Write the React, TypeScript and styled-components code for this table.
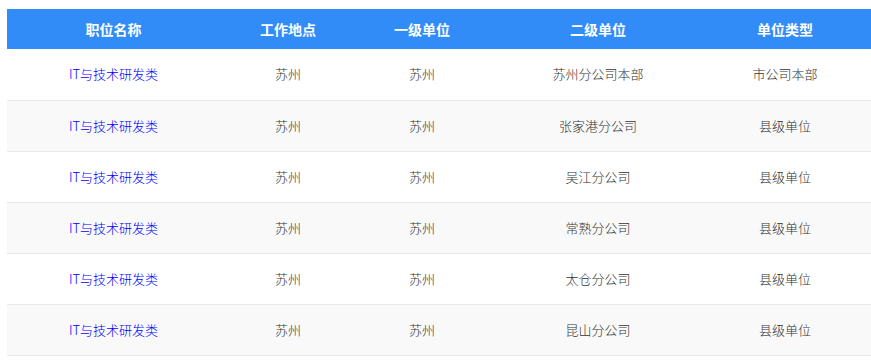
import React from "react";
import styled, { createGlobalStyle } from "styled-components";

const GlobalStyle = createGlobalStyle`
  html, body {
    margin: 0;
    padding: 0;
    background: #ffffff;
  }
  body {
    font-family: "Noto Sans CJK SC", "Noto Sans", sans-serif;
  }
`;

const Page = styled.div`
  padding: 9px 0 0 7px;
`;

const Table = styled.table`
  width: 864px;
  border-collapse: collapse;
  table-layout: fixed;
`;

const HeadRow = styled.tr`
  background: #328cf7;
  height: 40px;
`;

const HeadCell = styled.th<{ $last?: boolean }>`
  color: #ffffff;
  font-size: 14px;
  font-weight: 700;
  text-align: center;
  padding: 0 ${(p) => (p.$last ? "9px" : "0")} 0 0;
  line-height: 20px;
`;

const BodyRow = styled.tr<{ $striped: boolean }>`
  height: 51px;
  background: ${(p) => (p.$striped ? "#f9f9f9" : "#ffffff")};
  border-bottom: 1px solid #e8e8e8;
`;

const Cell = styled.td<{ $tone: "link" | "text"; $last?: boolean }>`
  font-size: 13px;
  font-weight: 300;
  text-align: center;
  color: ${(p) => (p.$tone === "link" ? "#0000ff" : "#333333")};
  padding: 0 ${(p) => (p.$last ? "9px" : "0")} 0 0;
  line-height: 18px;
`;

const columns = ["职位名称", "工作地点", "一级单位", "二级单位", "单位类型"];
const widths = [213, 136, 132, 220, 163];

const rows = [
  ["IT与技术研发类", "苏州", "苏州", "苏州分公司本部", "市公司本部"],
  ["IT与技术研发类", "苏州", "苏州", "张家港分公司", "县级单位"],
  ["IT与技术研发类", "苏州", "苏州", "吴江分公司", "县级单位"],
  ["IT与技术研发类", "苏州", "苏州", "常熟分公司", "县级单位"],
  ["IT与技术研发类", "苏州", "苏州", "太仓分公司", "县级单位"],
  ["IT与技术研发类", "苏州", "苏州", "昆山分公司", "县级单位"],
];

export default function App() {
  return (
    <>
      <GlobalStyle />
      <Page>
        <Table>
          <colgroup>
            {widths.map((w, i) => (
              <col key={i} style={{ width: w }} />
            ))}
          </colgroup>
          <thead>
            <HeadRow>
              {columns.map((c, i) => (
                <HeadCell key={c} $last={i === columns.length - 1}>
                  {c}
                </HeadCell>
              ))}
            </HeadRow>
          </thead>
          <tbody>
            {rows.map((r, ri) => (
              <BodyRow key={ri} $striped={ri % 2 === 1}>
                {r.map((v, ci) => (
                  <Cell
                    key={ci}
                    $tone={ci === 0 ? "link" : "text"}
                    $last={ci === r.length - 1}
                  >
                    {v}
                  </Cell>
                ))}
              </BodyRow>
            ))}
          </tbody>
        </Table>
      </Page>
    </>
  );
}
